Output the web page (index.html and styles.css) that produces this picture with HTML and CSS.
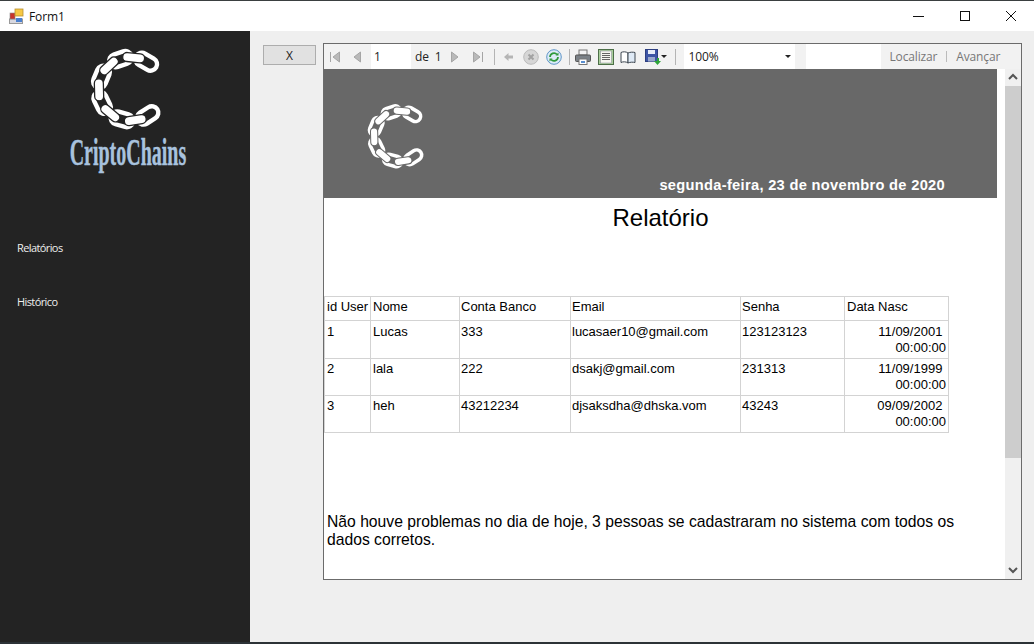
FILE: index.html
```html
<!DOCTYPE html>
<html lang="pt-BR">
<head>
    <meta charset="UTF-8">
    <title>Form1</title>
    <link rel="stylesheet" href="styles.css">
</head>
<body>
    <svg class="defs" width="0" height="0">
        <symbol id="chain" viewBox="0 0 80 90">
            <g fill="none" stroke="#fff" stroke-width="4.400">
                <rect x="34" y="6" width="23" height="13" rx="6.500" transform="rotate(30 45.500 44)"/>
                <rect x="34" y="6" width="23" height="13" rx="6.500" transform="rotate(-18.600 45.500 44)"/>
                <rect x="34" y="6" width="23" height="13" rx="6.500" transform="rotate(-67.200 45.500 44)"/>
                <rect x="34" y="6" width="23" height="13" rx="6.500" transform="rotate(-115.800 45.500 44)"/>
                <rect x="34" y="6" width="23" height="13" rx="6.500" transform="rotate(-164.400 45.500 44)"/>
                <rect x="34" y="6" width="23" height="13" rx="6.500" transform="rotate(-213 45.500 44)"/>
            </g>
            <g fill="#fff" stroke="currentColor" stroke-width="1.300">
                <rect x="34.500" y="8" width="22" height="9" rx="4.500" transform="rotate(5.700 45.500 44)"/>
                <rect x="34.500" y="8" width="22" height="9" rx="4.500" transform="rotate(-42.900 45.500 44)"/>
                <rect x="34.500" y="8" width="22" height="9" rx="4.500" transform="rotate(-91.500 45.500 44)"/>
                <rect x="34.500" y="8" width="22" height="9" rx="4.500" transform="rotate(-140.100 45.500 44)"/>
                <rect x="34.500" y="8" width="22" height="9" rx="4.500" transform="rotate(-188.700 45.500 44)"/>
            </g>
        </symbol>
    </svg>

    <div class="titlebar">
        <svg class="app-icon" width="16" height="16" viewBox="0 0 16 16">
            <rect x="0.500" y="11" width="13" height="4.500" fill="#d8d8e0" stroke="#999"/>
            <rect x="1" y="5" width="5" height="6" fill="#c8332b" stroke="#888" stroke-width="0.600"/>
            <rect x="6" y="1" width="8" height="7" fill="#f6c844" stroke="#b89030" stroke-width="0.800"/>
            <rect x="7" y="10" width="6" height="4" fill="#4a80d0"/>
        </svg>
        <span class="title-text">Form1</span>
        <div class="win-buttons">
            <svg width="12" height="12" viewBox="0 0 12 12"><path d="M0 6.500H11" stroke="#111" fill="none"/></svg>
            <svg width="12" height="12" viewBox="0 0 12 12"><rect x="1.500" y="1.500" width="9" height="9" stroke="#111" fill="none"/></svg>
            <svg width="12" height="12" viewBox="0 0 12 12"><path d="M1 1L11 11M11 1L1 11" stroke="#111" fill="none"/></svg>
        </div>
    </div>

    <div class="window">
        <div class="sidebar">
            <svg class="logo" width="80" height="90"><use href="#chain"/></svg>
            <div class="brand"><span>CriptoChains</span></div>
            <a class="menu-item first">Relatórios</a>
            <a class="menu-item">Histórico</a>
        </div>

        <div class="main">
            <button class="close-btn">X</button>

            <div class="viewer">
                <div class="toolbar">
                    <svg class="tb" width="12" height="16" viewBox="0 0 12 16"><path d="M1.500 3V13M10.500 3V13L4 8Z" fill="#b9b9b9" stroke="#a5a5a5"/></svg>
                    <svg class="tb prev" width="10" height="16" viewBox="0 0 10 16"><path d="M8.500 3V13L2 8Z" fill="#b9b9b9" stroke="#a5a5a5"/></svg>
                    <span class="page-box">1</span>
                    <span class="tb-text de">de</span>
                    <span class="tb-text total">1</span>
                    <svg class="tb next" width="10" height="16" viewBox="0 0 10 16"><path d="M1.500 3V13L8 8Z" fill="#b9b9b9" stroke="#a5a5a5"/></svg>
                    <svg class="tb last" width="12" height="16" viewBox="0 0 12 16"><path d="M10.500 3V13M1.500 3V13L8 8Z" fill="#b9b9b9" stroke="#a5a5a5"/></svg>
                    <i class="sep s1"></i>
                    <svg class="tb back" width="11" height="16" viewBox="0 0 11 16"><path d="M1 8L5.500 4V6.500H10V9.500H5.500V12Z" fill="#b5b5b5"/></svg>
                    <svg class="tb stop" width="16" height="16" viewBox="0 0 16 16"><circle cx="8" cy="8" r="7.300" fill="#d6d6d6" stroke="#bbb"/><path d="M5.500 5.500L10.500 10.500M10.500 5.500L5.500 10.500" stroke="#a2a2a2" stroke-width="2"/></svg>
                    <svg class="tb refresh" width="16" height="16" viewBox="0 0 16 16"><circle cx="8" cy="8" r="7.300" fill="#dcebf8" stroke="#5f95c8"/><path d="M4 8A4 4 0 0 1 11 5.500M12 8A4 4 0 0 1 5 10.500" fill="none" stroke="#2f9a3c" stroke-width="1.800"/><path d="M9.500 6.500H12.500V3.500ZM6.500 9.500H3.500V12.500Z" fill="#2f9a3c"/></svg>
                    <i class="sep s2"></i>
                    <svg class="tb print" width="16" height="16" viewBox="0 0 16 16"><rect x="4" y="1" width="8" height="5" fill="#f4f4f4" stroke="#777"/><rect x="0.500" y="6" width="15" height="6.500" rx="1" fill="#7b8187" stroke="#555"/><rect x="4" y="10" width="8" height="5.500" fill="#fff" stroke="#777"/><rect x="6" y="12" width="4" height="2" fill="#5a8fd0"/></svg>
                    <svg class="tb page" width="16" height="16" viewBox="0 0 16 16"><rect x="0.500" y="0.500" width="15" height="15" fill="#a9cf9b" stroke="#4d6f48"/><rect x="2.500" y="2" width="11" height="12" fill="#f7f7f2" stroke="#889" stroke-width="0.500"/><path d="M4 4.500H12M4 6.500H12M4 8.500H12M4 10.500H12" stroke="#666"/></svg>
                    <svg class="tb book" width="16" height="16" viewBox="0 0 16 16"><path d="M1 3.500C3 2.500 6 2.500 8 4V14C6 12.500 3 12.500 1 13.500Z" fill="#fff" stroke="#3c4650"/><path d="M8 4C10 3 13 3 15 3.500V13.500C13 13 10 13 8 14Z" fill="#dfeaf6" stroke="#3c4650"/></svg>
                    <svg class="tb save" width="16" height="16" viewBox="0 0 16 16"><rect x="0.500" y="0.500" width="12" height="12" fill="#3d55a5" stroke="#2d3f80"/><rect x="3" y="1" width="7" height="4" fill="#e8eef8"/><rect x="3" y="8" width="7" height="4.500" fill="#9aa8cc"/><path d="M9 12H12V9H14V12H16L12.500 16Z" fill="#2fa53a"/></svg>
                    <span class="caret small"></span>
                    <i class="sep s3"></i>
                    <div class="zoom-box">100%<span class="caret"></span></div>
                    <div class="blank"></div>
                    <div class="find">
                        <span>Localizar</span>
                        <i class="sep"></i>
                        <span>Avançar</span>
                    </div>
                </div>

                <div class="body">
                    <div class="report">
                        <div class="report-header">
                            <svg class="report-logo" width="64" height="72"><use href="#chain"/></svg>
                            <div class="report-date">segunda-feira, 23 de novembro de 2020</div>
                        </div>
                        <h1 class="report-title">Relatório</h1>
                        <table class="report-table">
                            <colgroup>
                                <col class="c1"><col class="c2"><col class="c3"><col class="c4"><col class="c5"><col class="c6">
                            </colgroup>
                            <tr class="head"><td>id User</td><td>Nome</td><td class="tight">Conta Banco</td><td class="tight">Email</td><td class="tight">Senha</td><td>Data Nasc</td></tr>
                            <tr class="r1"><td>1</td><td>Lucas</td><td class="tight">333</td><td class="tight">lucasaer10@gmail.com</td><td class="tight">123123123</td><td class="date">11/09/2001 <br>00:00:00</td></tr>
                            <tr class="r2"><td>2</td><td>lala</td><td class="tight">222</td><td class="tight">dsakj@gmail.com</td><td class="tight">231313</td><td class="date">11/09/1999 <br>00:00:00</td></tr>
                            <tr class="r2"><td>3</td><td>heh</td><td class="tight">43212234</td><td class="tight">djsaksdha@dhska.vom</td><td class="tight">43243</td><td class="date">09/09/2002 <br>00:00:00</td></tr>
                        </table>
                        <p class="report-text">Não houve problemas no dia de hoje, 3 pessoas se cadastraram no sistema com todos os dados corretos.</p>
                    </div>
                    <div class="scrollbar">
                        <svg class="arrow" width="16" height="17" viewBox="0 0 16 17"><path d="M4 10L8 6L12 10" fill="none" stroke="#555" stroke-width="2"/></svg>
                        <div class="thumb"></div>
                        <div class="track"></div>
                        <svg class="arrow" width="16" height="17" viewBox="0 0 16 17"><path d="M4 6L8 10L12 6" fill="none" stroke="#555" stroke-width="2"/></svg>
                    </div>
                </div>
            </div>
        </div>
    </div>
    <div class="taskstrip"></div>
</body>
</html>
```

FILE: styles.css
```css
/* Janela Form1 */
html, body {
    margin: 0;
    padding: 0;
    height: 644px;
    overflow: hidden;
}

body {
    display: flex;
    flex-direction: column;
    background-color: #efefef;
    font-family: "Liberation Sans", Arial, sans-serif;
    border-top: 1px solid #3a3f40;
    box-sizing: border-box;
}

.defs {
    display: none;
}

.titlebar {
    height: 30px;
    flex: none;
    display: flex;
    align-items: center;
    background-color: #fff;
    padding-left: 9px;
}

.title-text {
    margin-left: 4px;
    font-family: "Open Sans", sans-serif;
    font-size: 12px;
    letter-spacing: -0.1px;
    color: #111;
}

.win-buttons {
    margin-left: auto;
    display: flex;
    gap: 34px;
    padding-right: 17px;
}

.window {
    flex: 1;
    display: flex;
    min-height: 0;
}

/* Menu lateral */
.sidebar {
    width: 250px;
    flex: none;
    background-color: #232323;
    color: #232323;
}

.logo {
    display: block;
    margin: 14px 0 0 85px;
}

.brand {
    margin-top: -2px;
    height: 38px;
    text-align: center;
    padding-left: 5px;
}

.brand span {
    display: inline-block;
    font-family: "Liberation Serif", serif;
    font-size: 37px;
    font-weight: bold;
    line-height: 38px;
    color: #a8c2de;
    -webkit-text-stroke: 0.4px #a8c2de;
    transform: scale(0.54, 1.05);
    transform-origin: center;
    white-space: nowrap;
}

.menu-item {
    display: block;
    margin: 0 0 38px 17px;
    font-family: "Open Sans", sans-serif;
    font-size: 11px;
    line-height: 16px;
    letter-spacing: -0.6px;
    color: #eee;
}

.menu-item.first {
    margin-top: 69px;
}

/* Area principal */
.main {
    flex: 1;
    display: flex;
    align-items: flex-start;
    padding: 12px 12px 0 13px;
}

.close-btn {
    width: 53px;
    height: 20px;
    margin-top: 2px;
    padding: 0;
    background-color: #e1e1e1;
    border: 1px solid #adadad;
    font-family: "Open Sans", sans-serif;
    font-size: 12px;
    color: #222;
}

.viewer {
    width: 699px;
    height: 537px;
    margin-left: 7px;
    box-sizing: border-box;
    border: 1px solid #6b6b6b;
    display: flex;
    flex-direction: column;
    background-color: #fff;
}

/* Barra de ferramentas */
.toolbar {
    height: 25px;
    flex: none;
    display: flex;
    align-items: center;
    background-color: #f2f2f2;
    padding-left: 5px;
    font-family: "Open Sans", sans-serif;
    font-size: 12px;
    letter-spacing: -0.15px;
    color: #222;
}

.tb {
    flex: none;
}

.prev { margin-left: 11px; }
.next { margin-left: 8px; }
.last { margin-left: 12px; }
.back { margin-left: 8px; }
.stop { margin-left: 9px; }
.refresh { margin-left: 7px; }
.print { margin-left: 5px; }
.page { margin-left: 7px; }
.book { margin-left: 6px; }
.save { margin-left: 9px; }

.page-box {
    width: 37px;
    height: 25px;
    margin-left: 9px;
    padding-left: 3px;
    line-height: 25px;
    background-color: #fff;
}

.de { margin-left: 4px; }
.total { margin-left: 6px; }

.sep {
    width: 1px;
    height: 16px;
    flex: none;
    background-color: #b4b4b4;
}

.s1 { margin-left: 10px; }
.s2 { margin-left: 7px; }
.s3 { margin-left: 8px; }

.caret {
    width: 0;
    height: 0;
    border-left: 3px solid transparent;
    border-right: 3px solid transparent;
    border-top: 3px solid #222;
    margin-left: auto;
    margin-right: 4px;
}

.caret.small {
    margin: 0;
    flex: none;
}

.zoom-box {
    width: 106px;
    height: 25px;
    margin-left: 8px;
    padding-left: 5px;
    display: flex;
    align-items: center;
    background-color: #fff;
}

.blank {
    width: 75px;
    height: 25px;
    margin-left: 11px;
    background-color: #fff;
}

.find {
    flex: 1;
    display: flex;
    align-items: center;
    gap: 9px;
    padding-left: 9px;
    color: #777;
}

.find .sep {
    height: 11px;
    background-color: #bbb;
}

/* Relatorio */
.body {
    flex: 1;
    display: flex;
    min-height: 0;
}

.report {
    flex: 1;
    min-width: 0;
    color: #000;
}

.report-header {
    width: 673px;
    height: 129px;
    background-color: #686868;
    color: #686868;
    position: relative;
}

.report-logo {
    position: absolute;
    left: 39px;
    top: 32px;
}

.report-date {
    position: absolute;
    right: 52px;
    bottom: 5px;
    font-size: 14.67px;
    font-weight: bold;
    letter-spacing: 0.3px;
    color: #fff;
}

.report-title {
    margin: 6px 0 0;
    width: 673px;
    text-align: center;
    font-size: 24px;
    line-height: 28px;
    font-weight: normal;
}

.report-table {
    margin: 64px 0 0 0;
    border-collapse: collapse;
    table-layout: fixed;
    width: 624px;
    font-size: 13px;
    line-height: 16px;
}

.report-table td {
    border: 1px solid #d3d3d3;
    padding: 2px 2px 0;
    vertical-align: top;
    white-space: nowrap;
}

.report-table .r1 td {
    padding-top: 3px;
}

.report-table td.tight {
    padding-left: 1px;
}

.report-table .date {
    text-align: right;
    white-space: pre;
}

.c1 { width: 46px; }
.c2 { width: 89px; }
.c3 { width: 111px; }
.c4 { width: 170px; }
.c5 { width: 104px; }
.c6 { width: 104px; }

.head { height: 24px; }
.r1 { height: 38px; }
.r2 { height: 37px; }

.report-text {
    margin: 80px 40px 0 3px;
    width: 640px;
    font-size: 15.7px;
    line-height: 18px;
}

/* Barra de rolagem */
.scrollbar {
    width: 16px;
    flex: none;
    display: flex;
    flex-direction: column;
    background-color: #f0f0f0;
}

.thumb {
    height: 372px;
    background-color: #cdcdcd;
}

.track {
    flex: 1;
}

.taskstrip {
    height: 2px;
    flex: none;
    background-color: #2c3236;
}
```
